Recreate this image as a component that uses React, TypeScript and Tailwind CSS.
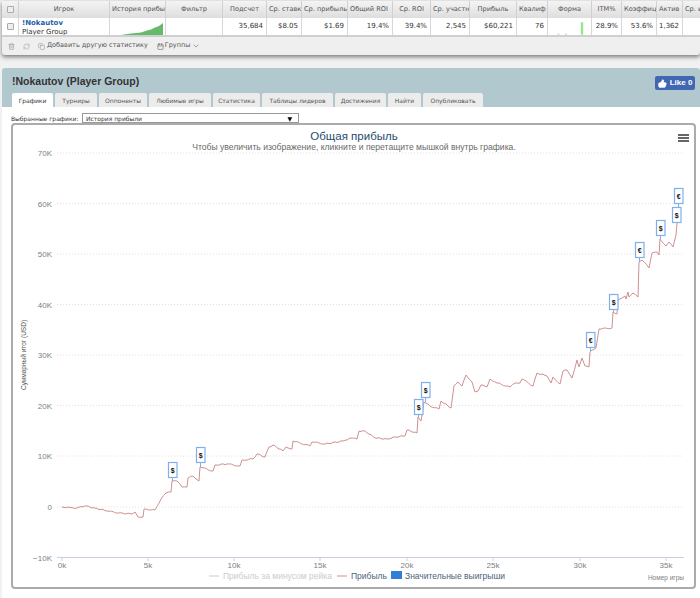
import { ThumbsUp, Trash2, RefreshCw, Copy, ChevronDown, Calendar } from "lucide-react";

const COLUMNS = [
    { label: "", w: "w-[17px]" },
    { label: "Игрок", w: "w-[91px]" },
    { label: "История прибыли", w: "w-[56px]", clip: true },
    { label: "Фильтр", w: "w-[57px]" },
    { label: "Подсчет", w: "w-[44px]", value: "35,684" },
    { label: "Ср. ставка", w: "w-[35px]", value: "$8.05", clip: true },
    { label: "Ср. прибыль", w: "w-[46px]", value: "$1.69", clip: true },
    { label: "Общий ROI", w: "w-[45px]", value: "19.4%", clip: true },
    { label: "Ср. ROI", w: "w-[38px]", value: "39.4%" },
    { label: "Ср. участники", w: "w-[39px]", value: "2,545", clip: true },
    { label: "Прибыль", w: "w-[47px]", value: "$60,221" },
    { label: "Квалиф", w: "w-[31px]", value: "76", clip: true },
    { label: "Форма", w: "w-[44px]" },
    { label: "ITM%", w: "w-[30px]", value: "28.9%" },
    { label: "Коэффициент", w: "w-[35px]", value: "53.6%", clip: true },
    { label: "Актив", w: "w-[26px]", value: "1,362", clip: true },
    { label: "Ср. игр", w: "w-[20px]", value: "", clip: true },
];

const TABS = [
    { label: "Графики", w: "w-[41px]" },
    { label: "Турниры", w: "w-[42px]" },
    { label: "Оппоненты", w: "w-[48px]" },
    { label: "Любимые игры", w: "w-[62px]" },
    { label: "Статистика", w: "w-[47px]" },
    { label: "Таблицы лидеров", w: "w-[71px]" },
    { label: "Достижения", w: "w-[51px]" },
    { label: "Найти", w: "w-[33px]" },
    { label: "Опубликовать", w: "w-[60px]" },
];

const PROFIT: [number, number][] = [
    [62, 507], [70, 507.5], [77, 508], [85, 506], [95, 508], [107, 511], [118, 513], [132, 514], [135, 512], [138, 517], [143, 517], [144, 509],
    [155, 510], [161, 499], [166, 493], [171, 492], [172, 481], [177, 481], [182, 487], [187, 487], [188, 478], [193, 476], [199, 481], [200, 467],
    [213, 471], [215, 465], [227, 464], [240, 466], [242, 460], [253, 459], [257, 454], [265, 457], [269, 447], [273, 445], [283, 451], [286, 447],
    [292, 449], [293, 441], [310, 446], [312, 442], [325, 444], [343, 441], [350, 438], [357, 439], [359, 431], [365, 431], [375, 438], [387, 439],
    [395, 437], [405, 436], [407, 430], [417, 433], [418, 417], [421, 421], [424, 402], [430, 406], [439, 409], [441, 401], [451, 408], [454, 386],
    [458, 382], [462, 386], [466, 375], [472, 382], [475, 392], [478, 391], [481, 385], [487, 387], [490, 379], [497, 383], [510, 387], [515, 383],
    [520, 383], [522, 379], [533, 386], [537, 373], [547, 376], [551, 383], [553, 377], [560, 384], [563, 371], [567, 370], [572, 378], [577, 360],
    [579, 367], [582, 358], [585, 366], [589, 367], [590, 352], [596, 348], [599, 329], [612, 328], [613, 312], [617, 314], [618, 300], [622, 298],
    [625, 296], [626, 299], [628, 292], [629, 297], [633, 293], [638, 297], [639, 262], [642, 260], [649, 268], [652, 253], [657, 252], [659, 255],
    [660, 239], [666, 246], [669, 242], [673, 247], [676, 235], [677, 223],
];

const FLAGS = [
    { x: 168, y: 462, to: 481, s: "$" },
    { x: 196, y: 447, to: 467, s: "$" },
    { x: 414, y: 399, to: 417, s: "$" },
    { x: 421, y: 382, to: 402, s: "$" },
    { x: 586, y: 332, to: 352, s: "€" },
    { x: 609, y: 294, to: 312, s: "$" },
    { x: 635, y: 242, to: 262, s: "€" },
    { x: 656, y: 220, to: 239, s: "$" },
    { x: 672, y: 207, to: 223, s: "$" },
    { x: 674, y: 188, to: 207, s: "€" },
];

const Y_TICKS = [
    { y: 153, label: "70K" },
    { y: 203.5, label: "60K" },
    { y: 254, label: "50K" },
    { y: 304.5, label: "40K" },
    { y: 355, label: "30K" },
    { y: 405.5, label: "20K" },
    { y: 456, label: "10K" },
    { y: 507, label: "0" },
];

const X_TICKS = [
    { x: 62, label: "0k" },
    { x: 148, label: "5k" },
    { x: 234, label: "10k" },
    { x: 320, label: "15k" },
    { x: 407, label: "20k" },
    { x: 493, label: "25k" },
    { x: 580, label: "30k" },
    { x: 666, label: "35k" },
];

// the real series has a point per game, so roughen the long segments a little
function roughen(points: [number, number][]) {
    const out: string[] = [];
    points.forEach(([x, y], i) => {
        out.push(`${x},${y}`);
        const next = points[i + 1];
        if (!next || next[0] - x < 4) return;
        const steps = Math.floor((next[0] - x) / 2);
        for (let s = 1; s < steps; s++) {
            const t = s / steps;
            const px = x + (next[0] - x) * t;
            const py = y + (next[1] - y) * t + Math.sin(px * 2.3) * 0.6;
            out.push(`${px.toFixed(1)},${py.toFixed(1)}`);
        }
    });
    return out.join(" ");
}

function Checkbox() {
    return <div className="w-[7px] h-[7px] rounded-[1px] border border-[#aaa] bg-[#eee]" />;
}

function ProfitChart() {
    return (
        <svg viewBox="13 125 682 463" className="block w-[682px] h-[463px]" style={{ fontFamily: "'Liberation Sans', sans-serif" }}>
            <text x="354" y="140" textAnchor="middle" fontSize="11.5" fill="#274b6d">Общая прибыль</text>
            <text x="354" y="150" textAnchor="middle" fontSize="8.6" fill="#6a6a6a">Чтобы увеличить изображение, кликните и перетащите мышкой внутрь графика.</text>

            {/* burger */}
            <rect x="678" y="134" width="11" height="2" fill="#666" />
            <rect x="678" y="137" width="11" height="2" fill="#666" />
            <rect x="678" y="140" width="11" height="2" fill="#666" />

            {Y_TICKS.map((t) => (
                <g key={t.label}>
                    <line x1="57" x2="684" y1={t.y} y2={t.y} stroke="#e0e0e0" strokeDasharray="1 2" />
                    <text x="52" y={t.y + 3} textAnchor="end" fontSize="8" fill="#808080">{t.label}</text>
                </g>
            ))}
            <text x="52" y="561" textAnchor="end" fontSize="8" fill="#808080">−10K</text>
            <line x1="57" x2="684" y1="557.5" y2="557.5" stroke="#c8d0e0" />

            {X_TICKS.map((t) => (
                <g key={t.label}>
                    <line x1={t.x} x2={t.x} y1="557.5" y2="561" stroke="#c8d0e0" />
                    <text x={t.x} y="568" textAnchor="middle" fontSize="8" fill="#808080">{t.label}</text>
                </g>
            ))}

            <text transform="translate(26 355) rotate(-90)" textAnchor="middle" fontSize="6.5" fill="#555">Суммарный итог (USD)</text>
            <text x="684" y="580" textAnchor="end" fontSize="6.5" fill="#808080">Номер игры</text>

            <polyline points={roughen(PROFIT)} fill="none" stroke="#cf9090" strokeWidth="1" />

            {FLAGS.map((f) => (
                <g key={`${f.x}-${f.y}`}>
                    <line x1={f.x + 4.5} x2={f.x + 4.5} y1={f.y + 15} y2={f.to} stroke="#7fb0ee" />
                    <rect x={f.x + 0.5} y={f.y + 0.5} width="8.5" height="15" fill="#fff" stroke="#7fb0ee" strokeWidth="1.2" />
                    <text x={f.x + 4.8} y={f.y + 10.5} textAnchor="middle" fontSize="7" fontWeight="700" fill="#111">{f.s}</text>
                </g>
            ))}

            {/* legend */}
            <line x1="209" x2="219" y1="576" y2="576" stroke="#ccc" />
            <text x="223" y="579" fontSize="8.5" fill="#ccc">Прибыль за минусом рейка</text>
            <line x1="337" x2="347" y1="576" y2="576" stroke="#cf9090" />
            <text x="351" y="579" fontSize="8.5" fill="#4d5f7a">Прибыль</text>
            <rect x="391" y="571" width="11" height="8" fill="#2f7ed8" />
            <text x="405" y="579" fontSize="8.5" fill="#4d5f7a">Значительные выигрыши</text>
        </svg>
    );
}

export default function App() {
    return (
        <div className="w-[700px] h-[598px] overflow-hidden bg-[#f1f1f1] pl-[2px] pt-[1px] font-['DejaVu_Sans',sans-serif]">
            {/* Stats table */}
            <div className="h-[54px] bg-[#efefef] rounded-b-[3px] shadow-[0_2px_4px_rgba(0,0,0,0.5)]">
                <div className="flex h-[17px] bg-gradient-to-b from-[#f4f4f4] to-[#dedede]">
                    {COLUMNS.map((c, i) => (
                        <div key={i} className={`${c.w} shrink-0 overflow-hidden whitespace-nowrap border-r border-[#d0d0d0] flex items-center ${c.clip ? "justify-start pl-[2px]" : "justify-center"} text-[6.6px] text-[#555]`}>
                            {i === 0 ? <Checkbox /> : c.label}
                        </div>
                    ))}
                </div>
                <div className="flex h-[19px] bg-white border-b-2 border-[#cfcfcf]">
                    {COLUMNS.map((c, i) => (
                        <div key={i} className={`${c.w} shrink-0 overflow-hidden whitespace-nowrap border-r border-[#d8d8d8] flex items-center justify-end pr-[3px] text-[7px] text-[#333]`}>
                            {i === 0 && <div className="w-full pl-[3px] flex justify-center"><Checkbox /></div>}
                            {i === 1 && (
                                <div className="w-full pl-[3px] pt-[2px] leading-[9px]">
                                    <p className="font-bold text-[#1f5fa8]">!Nokautov</p>
                                    <p>Player Group</p>
                                </div>
                            )}
                            {i === 2 && (
                                <svg viewBox="0 0 54 18" className="w-[54px] h-[18px] shrink-0 -mr-[3px]">
                                    <polygon points="10,17 20,15.5 30,14.5 36,12.5 40,11.5 44,9.5 48,8 52,5 52,17" fill="#66bb6a" />
                                </svg>
                            )}
                            {i === 12 && (
                                <svg viewBox="0 0 44 18" className="w-[42px] h-[18px] shrink-0">
                                    <rect x="36.5" y="4" width="2.5" height="13" fill="#90e890" />
                                    <rect x="12" y="16" width="2" height="1" fill="#90e890" />
                                    <rect x="20" y="16" width="2" height="1" fill="#90e890" />
                                </svg>
                            )}
                            {c.value}
                        </div>
                    ))}
                </div>
                <div className="flex items-center h-[17px] pl-[6px] pt-[1px] text-[6.5px] text-[#555]">
                    <Trash2 size={7} className="text-[#999]" />
                    <RefreshCw size={7} className="ml-[8px] text-[#aaa]" />
                    <Copy size={7} className="ml-[8px] text-[#999]" />
                    <span className="ml-[2px]">Добавить другую статистику</span>
                    <Calendar size={7} className="ml-[9px] text-[#666]" />
                    <span className="ml-[1px]">Группы</span>
                    <ChevronDown size={8} className="ml-[2px] text-[#777]" />
                </div>
            </div>

            {/* Player panel */}
            <div className="mt-[13px] h-[530px] bg-white rounded-t-[3px]">
                <div className="relative h-[39px] bg-[#b2c8cf] rounded-t-[3px] pl-[10px] pt-[6px]">
                    <h1 className="font-['Liberation_Sans',sans-serif] font-bold text-[10.5px] leading-[15px] text-[#333]">!Nokautov (Player Group)</h1>
                    <div className="absolute right-[5px] top-[8px] flex items-center justify-center gap-[3px] w-[40px] h-[14px] rounded-[2px] bg-[#4267b2] font-['Liberation_Sans',sans-serif] text-[8px] font-bold text-white">
                        <ThumbsUp size={9} fill="white" />
                        Like 0
                    </div>
                    <div className="absolute left-[10px] bottom-0 flex gap-[2px]">
                        {TABS.map((t, i) => (
                            <div
                                key={t.label}
                                className={`${t.w} h-[14px] flex items-center justify-center whitespace-nowrap rounded-t-[2px] text-[6px] ${i === 0 ? "bg-white text-[#333]" : "bg-[#ececec] text-[#555]"}`}
                            >
                                {t.label}
                            </div>
                        ))}
                    </div>
                </div>

                <div className="flex items-center h-[16px] pt-[6px] pl-[9px] text-[6px] text-[#333]">
                    <span className="w-[71px] whitespace-nowrap">Выбранные графики:</span>
                    <div className="flex items-center justify-between w-[217px] h-[10px] border border-[#999] pl-[3px] pr-[6px]">
                        <span>История прибыли</span>
                        <span className="text-[6px] text-black">▼</span>
                    </div>
                </div>

                <div className="w-[685px] h-[466px] ml-[9px] border-2 border-[#ababab] rounded-[4px] overflow-hidden">
                    <ProfitChart />
                </div>
            </div>
        </div>
    );
}
